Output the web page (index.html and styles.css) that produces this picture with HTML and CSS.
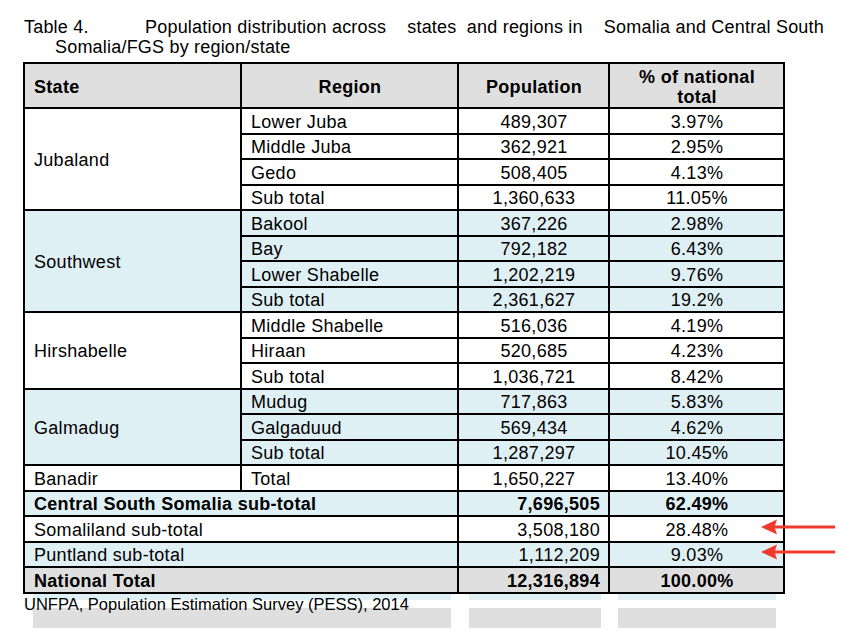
FILE: index.html
```html
<!DOCTYPE html>
<html>
<head>
<meta charset="utf-8">
<link rel="stylesheet" href="styles.css">
</head>
<body>
<div class="page">
  <div class="caption">
    <div class="cap-line1">
      <span class="cap-label">Table 4.</span>
      <span class="cap-text">
        <span>Population distribution across</span>
        <span>states&nbsp; and regions in</span>
        <span>Somalia and Central South</span>
      </span>
    </div>
    <div class="cap-line2">Somalia/FGS by region/state</div>
  </div>

  <table class="pop">
    <colgroup>
      <col class="c-state"><col class="c-region"><col class="c-pop"><col class="c-pct">
    </colgroup>
    <thead>
      <tr class="head">
        <th class="left">State</th>
        <th>Region</th>
        <th>Population</th>
        <th>% of national<br>total</th>
      </tr>
    </thead>
    <tbody>
      <tr class="white"><td rowspan="4">Jubaland</td><td>Lower Juba</td><td class="num">489,307</td><td class="num">3.97%</td></tr>
      <tr class="white"><td>Middle Juba</td><td class="num">362,921</td><td class="num">2.95%</td></tr>
      <tr class="white"><td>Gedo</td><td class="num">508,405</td><td class="num">4.13%</td></tr>
      <tr class="white"><td>Sub total</td><td class="num">1,360,633</td><td class="num">11.05%</td></tr>

      <tr class="blue"><td rowspan="4">Southwest</td><td>Bakool</td><td class="num">367,226</td><td class="num">2.98%</td></tr>
      <tr class="blue"><td>Bay</td><td class="num">792,182</td><td class="num">6.43%</td></tr>
      <tr class="blue"><td>Lower Shabelle</td><td class="num">1,202,219</td><td class="num">9.76%</td></tr>
      <tr class="blue"><td>Sub total</td><td class="num">2,361,627</td><td class="num">19.2%</td></tr>

      <tr class="white"><td rowspan="3">Hirshabelle</td><td>Middle Shabelle</td><td class="num">516,036</td><td class="num">4.19%</td></tr>
      <tr class="white"><td>Hiraan</td><td class="num">520,685</td><td class="num">4.23%</td></tr>
      <tr class="white"><td>Sub total</td><td class="num">1,036,721</td><td class="num">8.42%</td></tr>

      <tr class="blue"><td rowspan="3">Galmadug</td><td>Mudug</td><td class="num">717,863</td><td class="num">5.83%</td></tr>
      <tr class="blue"><td>Galgaduud</td><td class="num">569,434</td><td class="num">4.62%</td></tr>
      <tr class="blue"><td>Sub total</td><td class="num">1,287,297</td><td class="num">10.45%</td></tr>

      <tr class="white"><td>Banadir</td><td>Total</td><td class="num">1,650,227</td><td class="num">13.40%</td></tr>

      <tr class="blue bold"><td colspan="2">Central South Somalia sub-total</td><td class="right">7,696,505</td><td class="num">62.49%</td></tr>
      <tr class="white"><td colspan="2">Somaliland sub-total</td><td class="right">3,508,180</td><td class="num">28.48%</td></tr>
      <tr class="blue"><td colspan="2">Puntland sub-total</td><td class="right">1,112,209</td><td class="num">9.03%</td></tr>
      <tr class="grey bold"><td colspan="2">National Total</td><td class="right">12,316,894</td><td class="num">100.00%</td></tr>
    </tbody>
  </table>

  <div class="ghost">
    <div class="ghost-col g1"><div class="ghost-strip"></div><div class="ghost-box"></div></div>
    <div class="ghost-col g2"><div class="ghost-strip"></div><div class="ghost-box"></div></div>
    <div class="ghost-col g3"><div class="ghost-strip"></div><div class="ghost-box"></div></div>
  </div>

  <div class="source">UNFPA, Population Estimation Survey (PESS), 2014</div>

  <svg class="arrow arrow-1" width="74" height="16" viewBox="0 0 74 16">
    <polygon points="0,8 16,0.5 13.5,8 16,15.5" fill="#f23a2c"/>
    <rect x="13" y="6.5" width="61" height="3" fill="#f23a2c"/>
  </svg>
  <svg class="arrow arrow-2" width="74" height="16" viewBox="0 0 74 16">
    <polygon points="0,8 16,0.5 13.5,8 16,15.5" fill="#f23a2c"/>
    <rect x="13" y="6.5" width="61" height="3" fill="#f23a2c"/>
  </svg>
</div>
</body>
</html>
```

FILE: styles.css
```css
html, body {
  margin: 0;
  padding: 0;
  background: #ffffff;
}

body {
  font-family: "Liberation Sans", Arial, Helvetica, sans-serif;
  color: #000000;
}

.page {
  position: relative;
  width: 842px;
  height: 633px;
  padding: 17px 0 0 24px;
  box-sizing: border-box;
  overflow: hidden;
}

/* caption */
.caption {
  font-size: 18px;
  letter-spacing: 0.2px;
  line-height: 20px;
  width: 800px;
}

.cap-line1 {
  display: flex;
  white-space: nowrap;
}

.cap-label {
  width: 121px;
  flex: none;
}

.cap-text {
  flex: 1;
  display: flex;
  justify-content: space-between;
}

.cap-line2 {
  padding-left: 31px;
}

/* table */
.pop {
  margin-top: 5px;
  margin-left: -1px;
  border-collapse: collapse;
  table-layout: fixed;
  width: 762px;
  font-size: 18px;
  letter-spacing: 0.3px;
  line-height: 20px;
}

.c-state { width: 217px; }
.c-region { width: 217px; }
.c-pop { width: 151px; }
.c-pct { width: 175px; }

.pop th,
.pop td {
  border: 2px solid #000000;
  padding: 2px 8px 0 9px;
  vertical-align: middle;
  text-align: left;
  white-space: nowrap;
}

.pop th {
  font-weight: bold;
  text-align: center;
  padding-top: 3px;
}

.pop th.left {
  text-align: left;
}

.head {
  height: 41px;
  background: #dfdfdf;
}

.pop tbody tr {
  height: 25.5px;
}

.pop td.num {
  text-align: center;
}

.pop td.right {
  text-align: right;
}

.white { background: #ffffff; }
.blue { background: #dff0f5; }
.grey { background: #dfdfdf; }
.bold td { font-weight: bold; }

/* ghost of the next table below */
.ghost {
  display: flex;
  margin-left: 9px;
  margin-top: 0;
}

.ghost-col {
  display: flex;
  flex-direction: column;
  gap: 8px;
}

.g1 { width: 418px; }
.g2 { width: 132px; margin-left: 18px; }
.g3 { width: 158px; margin-left: 17px; }

.ghost-strip {
  height: 6px;
  background: #dff0f5;
}

.ghost-box {
  height: 20px;
  background: #dfdfdf;
}

.source {
  position: absolute;
  left: 24px;
  top: 595px;
  font-size: 16.5px;
  letter-spacing: 0;
  line-height: 18px;
}

/* red arrows */
.arrow {
  position: absolute;
  left: 761px;
}

.arrow-1 { top: 519px; }
.arrow-2 { top: 544px; }
```
